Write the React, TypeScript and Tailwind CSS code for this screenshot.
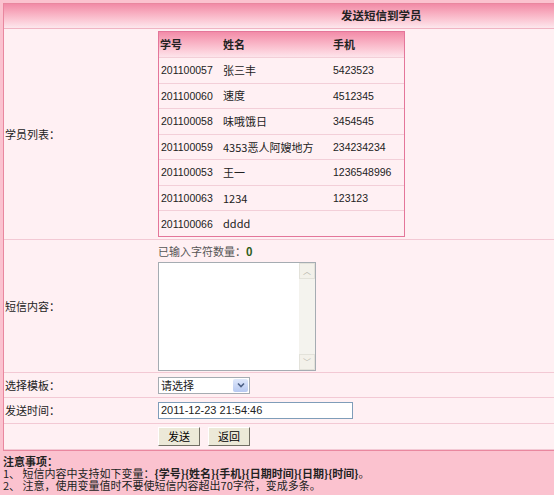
import React from "react";

const students = [
  { id: "201100057", name: "张三丰", phone: "5423523" },
  { id: "201100060", name: "速度", phone: "4512345" },
  { id: "201100058", name: "味哦饿日", phone: "3454545" },
  { id: "201100059", name: "4353恶人阿嫂地方", phone: "234234234" },
  { id: "201100053", name: "王一", phone: "1236548996" },
  { id: "201100063", name: "1234", phone: "123123" },
  { id: "201100066", name: "dddd", phone: "" },
];

const font = { fontFamily: '"Noto Sans CJK SC", "Liberation Sans", sans-serif' };
const latin = { fontFamily: '"Liberation Sans", sans-serif' };

function Row({ label, h, children }: { label?: string; h: string; children?: React.ReactNode }) {
  return (
    <div className={`flex border-b border-[#f3c9d4] ${h}`}>
      <div className="flex w-[154px] shrink-0 items-center pl-px">{label}</div>
      <div className="flex flex-1 flex-col justify-center">{children}</div>
    </div>
  );
}

function XpButton({ children }: { children: React.ReactNode }) {
  return (
    <button className="flex h-[19px] items-center border border-b-[#716f64] border-l-white border-r-[#716f64] border-t-white bg-[#ece9d8] px-[9px] text-[11px] leading-none text-black">
      {children}
    </button>
  );
}

export default function App() {
  return (
    <div className="h-[495px] w-[554px] overflow-hidden bg-[#fbc2cf] text-[11px] leading-none text-[#222]" style={font}>
      <div className="ml-[3px] mt-[3px] w-[570px] border border-[#e9879f] bg-[#fff0f3]">
        <div className="flex h-[25px] items-center border-b border-[#f0b4c3] bg-gradient-to-b from-[#f18aa6] to-[#fde7ed]">
          <span className="ml-[337px] text-[11.5px] font-bold text-[#222]">发送短信到学员</span>
        </div>

        <Row label="学员列表：" h="h-[211px]">
          <div className="w-[247px] border border-[#e4769a] bg-[#fff0f3]">
            <div className="flex h-[25px] items-center bg-gradient-to-b from-[#f28ba8] to-[#fde4eb] font-bold">
              <span className="w-[64px] pl-px">学号</span>
              <span className="w-[110px]">姓名</span>
              <span>手机</span>
            </div>
            {students.map((s) => (
              <div key={s.id} className="flex h-[25.6px] items-center border-t border-[#f3cfd8]">
                <span className="w-[64px] pl-[2px] text-[10.5px]" style={latin}>{s.id}</span>
                <span className="w-[110px]">{s.name}</span>
                <span className="text-[10.5px]" style={latin}>{s.phone}</span>
              </div>
            ))}
          </div>
        </Row>

        <Row label="短信内容：" h="h-[133px]">
          <div className="flex h-full flex-col pt-[6px]">
            <div className="mb-[5px] text-[#555]">
              已输入字符数量：<b className="text-[#2f5e1a]">0</b>
            </div>
            <div className="flex h-[109px] w-[158px] border border-[#a5acb2] bg-white">
              <div className="flex-1" />
              <div className="flex w-[16px] flex-col justify-between bg-[#f4f3ee]">
                <div className="flex h-[16px] items-center justify-center border border-[#e3e2da] bg-[#f3f1ea] text-[8px] text-[#b8b6ac]">︿</div>
                <div className="flex h-[16px] items-center justify-center border border-[#e3e2da] bg-[#f3f1ea] text-[8px] text-[#b8b6ac]">﹀</div>
              </div>
            </div>
          </div>
        </Row>

        <Row label="选择模板：" h="h-[25px]">
          <div className="flex h-[17px] w-[92px] items-center border border-[#a5acb2] bg-white">
            <span className="flex-1 pl-[2px]">请选择</span>
            <div className="m-px flex h-[13px] w-[15px] items-center justify-center rounded-[2px] bg-gradient-to-b from-[#dfe8fb] to-[#b7c9f1]">
              <svg width="8" height="6" viewBox="0 0 8 6">
                <path d="M1 1.5 L4 4.5 L7 1.5" stroke="#4d6185" strokeWidth="1.6" fill="none" />
              </svg>
            </div>
          </div>
        </Row>

        <Row label="发送时间：" h="h-[26px]">
          <div className="flex h-[17px] w-[195px] items-center border border-[#7f9db9] bg-white pl-[2px] text-[11px]" style={latin}>
            2011-12-23 21:54:46
          </div>
        </Row>

        <Row h="h-[26px]">
          <div className="flex gap-[8px]">
            <XpButton>发送</XpButton>
            <XpButton>返回</XpButton>
          </div>
        </Row>
      </div>

      <div className="flex flex-col gap-px pl-[3px] pt-[5px] text-[#222]">
        <div className="h-[11px] font-bold leading-[11px]">注意事项：</div>
        <div className="h-[11px] leading-[11px]">
          1、 短信内容中支持如下变量：<b>{"{学号}{姓名}{手机}{日期时间}{日期}{时间}"}</b>。
        </div>
        <div className="h-[11px] leading-[11px]">2、 注意，使用变量值时不要使短信内容超出70字符，变成多条。</div>
      </div>
    </div>
  );
}
